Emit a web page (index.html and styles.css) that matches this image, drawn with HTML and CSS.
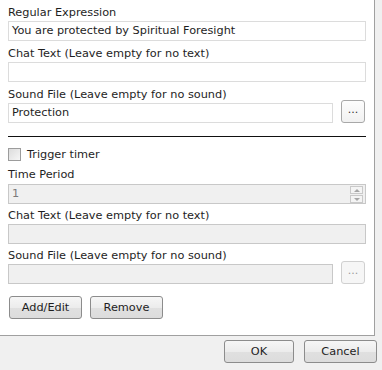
FILE: index.html
```html
<!DOCTYPE html>
<html>
    <head>
        <link rel="stylesheet" href="styles.css">
        <title>Trigger</title>
    </head>
    <body>
        <div class="panel">
            <label class="lbl">Regular Expression</label>
            <div class="box">You are protected by Spiritual Foresight</div>
            <label class="lbl">Chat Text (Leave empty for no text)</label>
            <div class="box"></div>
            <label class="lbl">Sound File (Leave empty for no sound)</label>
            <div class="row">
                <div class="box grow">Protection</div>
                <button class="browse">...</button>
            </div>
            <div class="sep"></div>
            <div class="check">
                <span class="tick"></span>
                <span>Trigger timer</span>
            </div>
            <label class="lbl">Time Period</label>
            <div class="box off spin">
                <span>1</span>
                <div class="arrows">
                    <div class="arr up"></div>
                    <div class="arr down"></div>
                </div>
            </div>
            <label class="lbl short">Chat Text (Leave empty for no text)</label>
            <div class="box off"></div>
            <label class="lbl short">Sound File (Leave empty for no sound)</label>
            <div class="row">
                <div class="box off grow"></div>
                <button class="browse dim">...</button>
            </div>
            <div class="actions">
                <button class="btn">Add/Edit</button>
                <button class="btn">Remove</button>
            </div>
        </div>
        <div class="footer">
            <button class="btn ok">OK</button>
            <button class="btn cancel">Cancel</button>
        </div>
    </body>
</html>
```

FILE: styles.css
```css
body {
    margin: 0;
    background-color: #f0f0f0;
    font-family: "DejaVu Sans", Verdana, sans-serif;
    font-size: 11.3px;
    color: #1e1e1e;
}
.panel {
    width: 375px;
    height: 336px;
    box-sizing: border-box;
    padding: 0 8px;
    background-color: #fff;
    border-right: 1px solid #a0a0a0;
    border-bottom: 1px solid #a0a0a0;
}
.lbl {
    display: block;
    height: 21px;
    line-height: 14px;
    padding-top: 6px;
    box-sizing: border-box;
}
.lbl.short {
    height: 20px;
    padding-top: 5px;
}
.box {
    height: 20px;
    box-sizing: border-box;
    border: 1px solid #dcdcdc;
    background-color: #fff;
    padding: 0 3px;
    line-height: 18px;
    white-space: nowrap;
    overflow: hidden;
}
.box.off {
    background-color: #f0f0f0;
    border-color: #c8c8c8;
    color: #7a7a7a;
}
.row {
    display: flex;
    align-items: flex-start;
}
.grow {
    flex: 1;
}
.browse {
    width: 24px;
    height: 23px;
    margin: -3px 1px 0 8px;
    padding: 0 0 4px 0;
    border: 1px solid #a8a8a8;
    border-radius: 3px;
    background: linear-gradient(#fdfdfd, #f1f1f1);
    font-family: inherit;
    font-size: 11px;
    color: #333;
    line-height: 10px;
}
.browse.dim {
    border-color: #d0d0d0;
    color: #9a9a9a;
    background: #f6f6f6;
}
.sep {
    height: 1px;
    background-color: #111;
    margin-top: 13px;
}
.check {
    display: flex;
    align-items: center;
    gap: 6px;
    margin-top: 11px;
    height: 13px;
}
.tick {
    width: 11px;
    height: 11px;
    border: 1px solid #9c9c9c;
    background: linear-gradient(135deg, #dcdcdc, #f6f6f6);
}
.check + .lbl {
    height: 23px;
    padding-top: 7px;
}
.spin {
    display: flex;
    justify-content: space-between;
    padding-right: 2px;
}
.arrows {
    display: flex;
    flex-direction: column;
    gap: 1px;
    padding-top: 1px;
}
.arr {
    width: 11px;
    height: 7px;
    border: 1px solid #c9c9c9;
    background-color: #f4f4f4;
    position: relative;
}
.arr::after {
    content: "";
    position: absolute;
    left: 3px;
    border-left: 3px solid transparent;
    border-right: 3px solid transparent;
}
.up::after {
    top: 2px;
    border-bottom: 3px solid #a6a6a6;
}
.down::after {
    top: 2px;
    border-top: 3px solid #a6a6a6;
}
.actions {
    display: flex;
    gap: 8px;
    margin-top: 12px;
    padding-left: 1px;
}
.btn {
    width: 73px;
    height: 23px;
    border: 1px solid #8c8c8c;
    border-radius: 3px;
    background: linear-gradient(#f6f6f6, #ececec 50%, #e0e0e0 51%, #dcdcdc);
    font-family: inherit;
    font-size: 11.3px;
    color: #1e1e1e;
    padding: 0;
}
.footer {
    display: flex;
    justify-content: flex-end;
    gap: 10px;
    padding: 4px 5px 0 0;
}
.ok {
    width: 70px;
}
```
